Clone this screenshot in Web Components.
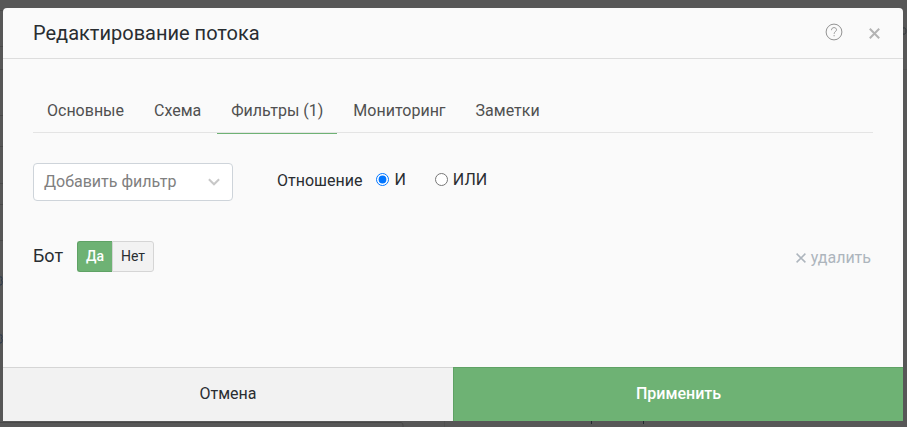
<!DOCTYPE html>
<html lang="ru">
<head>
<meta charset="utf-8">
<title>Редактирование потока</title>
<style>
    body {
        margin: 0;
        height: 427px;
        overflow: hidden;
        background-color: #575757;
        font-family: Roboto, sans-serif;
        font-size: 16px;
        color: #292d31;
        --green: #6eb274;
        --green-dark: #5fa265;
        --border: #dddddd;
        --surface: #fafafa;
    }
</style>
</head>
<body>
<page-backdrop></page-backdrop>
<modal-dialog>
    <modal-header slot="header">Редактирование потока</modal-header>
    <tab-list>
        <tab-item>Основные</tab-item>
        <tab-item>Схема</tab-item>
        <tab-item active>Фильтры (1)</tab-item>
        <tab-item>Мониторинг</tab-item>
        <tab-item>Заметки</tab-item>
    </tab-list>
    <filter-toolbar placeholder="Добавить фильтр" label="Отношение"></filter-toolbar>
    <filter-row name="Бот"></filter-row>
    <modal-button slot="footer">Отмена</modal-button>
    <modal-button slot="footer" primary>Применить</modal-button>
</modal-dialog>

<script>
class BaseElement extends HTMLElement {
    constructor() {
        super();
        this.attachShadow({ mode: "open" })
    }

    connectedCallback() {
        const template = document.createElement('template');
        template.innerHTML = `${this.getStyles()}${this.getMarkup()}`;
        this.shadowRoot.append(template.content.cloneNode(true))
    }
}

// Dimmed page, only its edges are visible around the dialog
class PageBackdrop extends BaseElement {
    getMarkup() {
        return `
        <svg width="907" height="427" viewBox="0 0 907 427" fill="none">
            <path d="M0 10.5h3M0 46.5h3M0 69.5h3M0 115.5h3M0 146.5h3M0 183.5h3M0 204.5h3M0 240.5h3" stroke="#4a4a4a"/>
            <path d="M0 422.5h401q2 0 2 3v2" stroke="#484848"/>
            <path d="M444.5 421v6M903 69.5h4" stroke="#505050"/>
            <path d="M903 28q3-1 3 3t-3 3" stroke="#33383c"/>
            <path d="M0 277q2-1 2 1.500t-1 2q2 0 1 3t-2 1M0 335q2-1 2 1.500t-1 2q2 0 1 3t-2 1" stroke="#2c3a4c"/>
            <path d="M591.500 421v3M643.500 421v3" stroke="#222a2e"/>
        </svg>
        `
    }

    getStyles() {
        return `
        <style>
            :host {
                position: absolute;
                top: 0;
                left: 0;
                z-index: -1;
            }
            svg {
                display: block;
            }
        </style>
        `
    }
}

class ModalDialog extends BaseElement {
    getMarkup() {
        return `
        <slot name="header"></slot>
        <main><slot></slot></main>
        <footer><slot name="footer"></slot></footer>
        `
    }

    getStyles() {
        return `
        <style>
            :host {
                display: flex;
                flex-direction: column;
                width: 900px;
                height: 413px;
                margin: 0 3px;
                border-top: 8px solid transparent;
            }
            ::slotted([slot="header"]) {
                border-radius: 4px 4px 0 0;
            }
            main {
                flex: 1;
                padding: 30px 30px 0;
                background-color: var(--surface);
            }
            footer {
                display: grid;
                grid-template-columns: 1fr 1fr;
                height: 54px;
            }
        </style>
        `
    }
}

class ModalHeader extends BaseElement {
    getMarkup() {
        return `
        <h1><slot></slot></h1>
        <svg class="help" width="18" height="18" viewBox="0 0 18 18" fill="none" stroke="#777">
            <circle cx="9" cy="9" r="7.900" stroke-width="0.800"/>
            <path d="M6.500 7.200C6.500 5.500 7.500 4.600 9 4.600s2.500.9 2.500 2.200c0 1.600-2.400 2-2.400 4.100M9.100 12v1.300" stroke-width="0.700"/>
        </svg>
        <svg class="close" width="11" height="11" viewBox="0 0 11 11" stroke="#b3b3b3" stroke-width="2">
            <path d="M.8.8l9.400 9.400M10.200.8L.8 10.200"/>
        </svg>
        `
    }

    getStyles() {
        return `
        <style>
            :host {
                display: flex;
                align-items: center;
                box-sizing: border-box;
                height: 51px;
                padding: 0 23px 0 30px;
                background-color: var(--surface);
                border-bottom: 1px solid var(--border);
            }
            h1 {
                flex: 1;
                margin: 0;
                font-size: 20px;
                font-weight: 400;
                line-height: 30px;
            }
            .help {
                margin: 0 26px 2px 0;
            }
        </style>
        `
    }
}

class TabList extends BaseElement {
    getMarkup() {
        return `<slot></slot>`
    }

    getStyles() {
        return `
        <style>
            :host {
                display: flex;
                height: 43px;
                border-bottom: 1px solid #e4e4e4;
            }
        </style>
        `
    }
}

class TabItem extends BaseElement {
    getMarkup() {
        return `<slot></slot>`
    }

    getStyles() {
        return `
        <style>
            :host {
                height: 44px;
                padding: 0 14px;
                margin-right: 2px;
                line-height: 43px;
                color: #505050;
                border-bottom: 1px solid transparent;
            }
            :host([active]) {
                border-bottom-color: var(--green);
            }
        </style>
        `
    }
}

class FilterToolbar extends BaseElement {
    getMarkup() {
        return `
        <div class="select">
            <span>${this.getAttribute('placeholder')}</span>
            <svg width="12" height="8" viewBox="0 0 12 8" fill="none" stroke="#c8c8c8" stroke-width="2">
                <path d="M.9 1.200L6 6.300l5.100-5.100"/>
            </svg>
        </div>
        <span class="label">${this.getAttribute('label')}</span>
        <label><input type="radio" name="relation" checked>И</label>
        <label><input type="radio" name="relation">ИЛИ</label>
        `
    }

    getStyles() {
        return `
        <style>
            :host {
                display: flex;
                align-items: center;
                margin-top: 30px;
            }
            .select {
                display: flex;
                align-items: center;
                justify-content: space-between;
                box-sizing: border-box;
                width: 200px;
                height: 38px;
                padding: 0 12px 0 10px;
                color: #808080;
                background-color: white;
                border: 1px solid #ced4da;
                border-radius: 4px;
            }
            .select span {
                padding-bottom: 2px;
            }
            .label {
                margin: 0 14px 4px 44px;
            }
            label {
                display: flex;
                align-items: center;
                margin: 0 29px 6px 0;
            }
            input {
                width: 13px;
                height: 13px;
                margin: 1px 5px 0 0;
            }
        </style>
        `
    }
}

class FilterRow extends BaseElement {
    getMarkup() {
        return `
        <span class="name">${this.getAttribute('name')}</span>
        <button class="yes">Да</button><button class="no">Нет</button>
        <span class="remove">
            <svg width="10" height="10" viewBox="0 0 10 10" stroke="#adb5bd" stroke-width="1.500">
                <path d="M.6.6l8.800 8.800M9.400.6L.6 9.400"/>
            </svg>
            <span>удалить</span>
        </span>
        `
    }

    getStyles() {
        return `
        <style>
            :host {
                display: flex;
                align-items: center;
                height: 31px;
                margin-top: 40px;
            }
            .name {
                width: 44px;
                padding-bottom: 2px;
                font-size: 18px;
            }
            button {
                box-sizing: border-box;
                height: 31px;
                padding: 0 0 2px;
                font: 14px Roboto, sans-serif;
            }
            .yes {
                width: 35px;
                color: white;
                font-weight: 500;
                background-color: var(--green);
                border: 1px solid var(--green-dark);
                border-right: 0;
                border-radius: 3px 0 0 3px;
            }
            .no {
                width: 42px;
                color: #292d31;
                background-color: #f2f2f2;
                border: 1px solid #d5d5d5;
                border-radius: 0 3px 3px 0;
            }
            .remove {
                display: flex;
                align-items: center;
                gap: 5px;
                margin: 3px 2px 0 auto;
                color: #adb5bd;
            }
            .remove span {
                margin: -1px 0 1px;
            }
        </style>
        `
    }
}

class ModalButton extends BaseElement {
    getMarkup() {
        return `<slot></slot>`
    }

    getStyles() {
        return `
        <style>
            :host {
                display: flex;
                align-items: center;
                justify-content: center;
                box-sizing: border-box;
                padding-bottom: 2px;
                background-color: #f2f2f2;
                border-top: 1px solid #d5d5d5;
            }
            :host([primary]) {
                color: white;
                font-weight: 500;
                background-color: var(--green);
                border-top-color: var(--green-dark);
                border-left: 1px solid var(--green-dark);
            }
        </style>
        `
    }
}

customElements.define('page-backdrop', PageBackdrop);
customElements.define('modal-dialog', ModalDialog);
customElements.define('modal-header', ModalHeader);
customElements.define('tab-list', TabList);
customElements.define('tab-item', TabItem);
customElements.define('filter-toolbar', FilterToolbar);
customElements.define('filter-row', FilterRow);
customElements.define('modal-button', ModalButton);
</script>
</body>
</html>
